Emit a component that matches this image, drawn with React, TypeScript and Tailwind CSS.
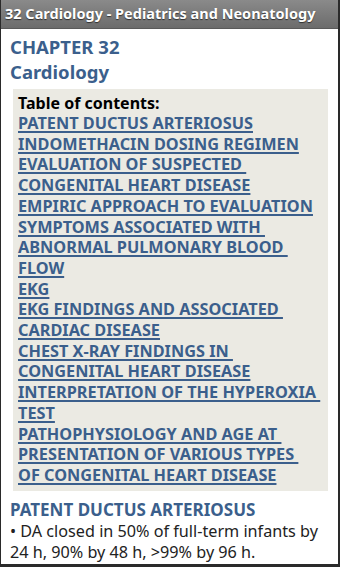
import React from "react";

const links: string[][] = [
  ["PATENT DUCTUS ARTERIOSUS"],
  ["INDOMETHACIN DOSING REGIMEN"],
  ["EVALUATION OF SUSPECTED\u00a0", "CONGENITAL HEART DISEASE"],
  ["EMPIRIC APPROACH TO EVALUATION"],
  ["SYMPTOMS ASSOCIATED WITH\u00a0", "ABNORMAL PULMONARY BLOOD\u00a0", "FLOW"],
  ["EKG"],
  ["EKG FINDINGS AND ASSOCIATED\u00a0", "CARDIAC DISEASE"],
  ["CHEST X-RAY FINDINGS IN\u00a0", "CONGENITAL HEART DISEASE"],
  ["INTERPRETATION OF THE HYPEROXIA\u00a0", "TEST"],
  ["PATHOPHYSIOLOGY AND AGE AT\u00a0", "PRESENTATION OF VARIOUS TYPES\u00a0", "OF CONGENITAL HEART DISEASE"],
];

export default function App() {
  return (
    <div
      className="w-[340px] h-[567px] overflow-hidden bg-[#2a2a2a] flex flex-col pl-px pr-[2px] pb-[3px]"
      style={{ fontFamily: '"Noto Sans", "Open Sans", sans-serif' }}
    >
      <div className="h-[29px] shrink-0 bg-gradient-to-b from-[#8a8a8a] to-[#6c6c6c] border-b border-[#5a5a5a] flex items-center pl-[4px]">
        <span className="text-white font-bold text-[14.5px] whitespace-nowrap [text-shadow:0_1px_1px_rgba(0,0,0,0.6)]">
          32 Cardiology - Pediatrics and Neonatology
        </span>
      </div>
      <div className="flex-1 bg-white flex flex-col pt-[5px] pl-[9px] pr-[10px] overflow-hidden">
        <div className="text-[#3b5f8c] font-bold text-[18.5px] leading-[25px]">
          <div>CHAPTER 32</div>
          <div>Cardiology</div>
        </div>
        <div className="mt-[5px] ml-[3px] bg-[#ebeae3] pl-[5px] pt-[4px] pb-[5px] flex flex-col">
          <div className="text-black font-bold text-[16px] leading-[20px]">Table of contents:</div>
          {links.map((l, i) => (
            <a
              key={i}
              href="#"
              className="block text-[#3b5f8c] font-bold text-[16.3px] leading-[20.7px] underline decoration-[1.5px] underline-offset-[2px] whitespace-nowrap"
            >
              {l.map((line, j) => (
                <React.Fragment key={j}>
                  {j > 0 && <br />}
                  {line}
                </React.Fragment>
              ))}
            </a>
          ))}
        </div>
        <div className="mt-[8px] text-[#3b5f8c] font-bold text-[17px] leading-[22px]">PATENT DUCTUS ARTERIOSUS</div>
        <div className="text-[#222] text-[16.2px] leading-[21.5px]">
          • DA closed in 50% of full-term infants by 24 h, 90% by 48 h, &gt;99% by 96 h.
        </div>
      </div>
    </div>
  );
}
